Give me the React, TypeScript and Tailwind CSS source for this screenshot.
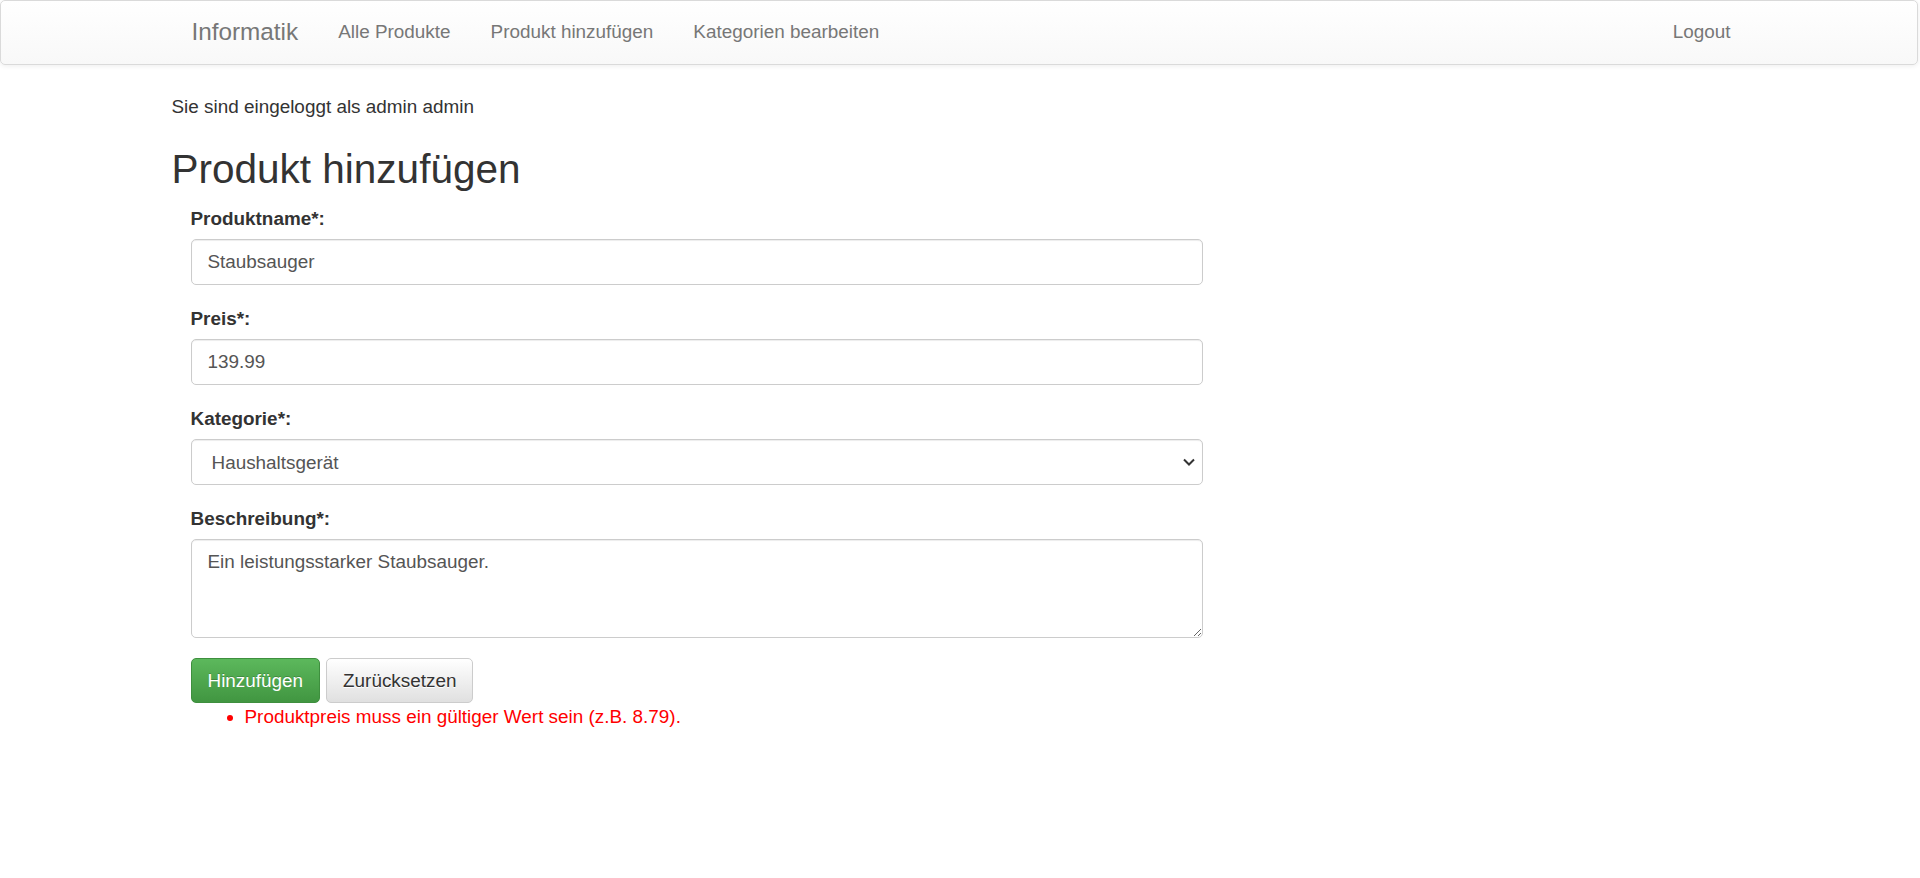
import React from "react";

const navLinks = ["Alle Produkte", "Produkt hinzufügen", "Kategorien bearbeiten"];

function Field({ label, children }: { label: string; children: React.ReactNode }) {
  return (
    <div className="flex flex-col mb-[20px]">
      <label className="font-bold leading-[27px] mb-[7px] text-[#333]">{label}</label>
      {children}
    </div>
  );
}

const inputCls =
  "w-[1012px] h-[46px] border border-[#ccc] rounded-[5px] px-[16px] text-[#555] bg-white outline-none shadow-[inset_0_1px_1px_rgba(0,0,0,0.075)]";

export default function App() {
  return (
    <div className="min-h-[878px] bg-white font-['Liberation_Sans',Arial,sans-serif] text-[18.9px] leading-[27px] text-[#333]">
      {/* navbar */}
      <div className="h-[65px] border border-[#dadada] rounded-[5px] bg-gradient-to-b from-white to-[#f8f8f8] shadow-[0_1px_5px_rgba(0,0,0,0.075)] mr-[2px]">
        <div className="w-[1577px] mx-auto h-full flex items-center pb-[3px] pl-[1px] text-[#777]">
          <a className="px-[20px] text-[24.3px]">Informatik</a>
          {navLinks.map((l) => (
            <a key={l} className="px-[20px]">
              {l}
            </a>
          ))}
          <a className="ml-auto px-[20px] mr-[-3px]">Logout</a>
        </div>
      </div>

      <div className="w-[1577px] mx-auto mt-[28px]">
        <p>Sie sind eingeloggt als admin admin</p>
        <h2 className="text-[40.5px] leading-[44.5px] mt-[27px] mb-[13.5px]">Produkt hinzufügen</h2>

        <form className="pl-[19px]" onSubmit={(e) => e.preventDefault()}>
          <Field label="Produktname*:">
            <input className={inputCls} defaultValue="Staubsauger" />
          </Field>
          <Field label="Preis*:">
            <input className={inputCls} defaultValue="139.99" />
          </Field>
          <Field label="Kategorie*:">
            <div className="relative w-[1012px]">
              <select className={`${inputCls} appearance-none pl-[20px]`} defaultValue="haushalt">
                <option value="haushalt">Haushaltsgerät</option>
              </select>
              <svg
                className="absolute right-[8px] top-[19px] pointer-events-none"
                width="12"
                height="8"
                viewBox="0 0 12 8"
                fill="none"
              >
                <path d="M1 1.5l5 5 5-5" stroke="#333" strokeWidth="2" />
              </svg>
            </div>
          </Field>
          <Field label="Beschreibung*:">
            <textarea
              className="w-[1012px] h-[99px] border border-[#ccc] rounded-[5px] px-[16px] py-[8px] text-[#555] outline-none resize-y shadow-[inset_0_1px_1px_rgba(0,0,0,0.075)]"
              defaultValue="Ein leistungsstarker Staubsauger."
            />
          </Field>

          <div className="flex gap-[6px]">
            <button
              type="submit"
              className="h-[45px] px-[16px] rounded-[5px] border border-[#3e8f3e] bg-gradient-to-b from-[#5cb85c] to-[#419641] text-white [text-shadow:0_-1px_0_rgba(0,0,0,0.2)]"
            >
              Hinzufügen
            </button>
            <button
              type="reset"
              className="h-[45px] px-[16px] rounded-[5px] border border-[#ccc] bg-gradient-to-b from-white to-[#e0e0e0] text-[#333] [text-shadow:0_1px_0_#fff]"
            >
              Zurücksetzen
            </button>
          </div>
          <ul className="list-disc pl-[54px] text-[#f00]">
            <li>Produktpreis muss ein gültiger Wert sein (z.B. 8.79).</li>
          </ul>
        </form>
      </div>
    </div>
  );
}
